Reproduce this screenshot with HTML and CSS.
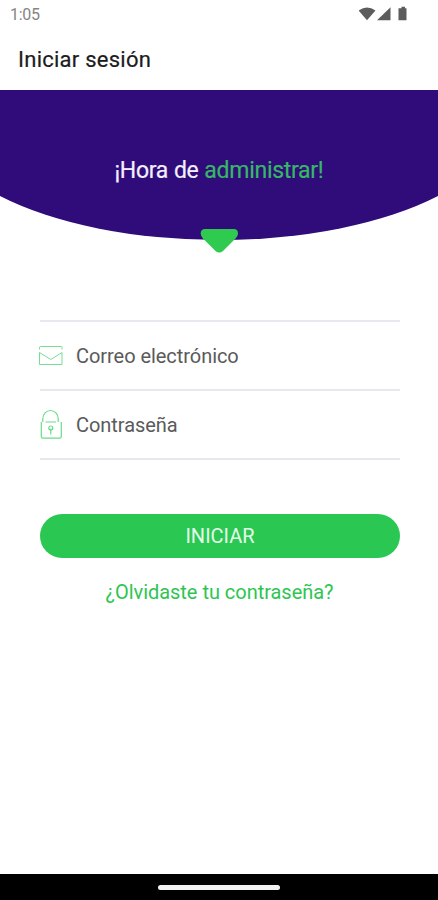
FILE: index.html
```html
<!DOCTYPE html>
<html lang="es">
<head>
<meta charset="utf-8">
<meta name="viewport" content="width=device-width, initial-scale=1">
<title>Iniciar sesión</title>
<link rel="stylesheet" href="styles.css">
</head>
<body>
<div class="screen">
  <div class="status">
    <span class="clock">1:05</span>
    <svg class="status-icons" width="50" height="16" viewBox="0 0 50 16" fill="#5c5c5c">
      <path d="M-0.500 4.500Q8-1.500 16.500 4.500L8 14.300Z"/>
      <path d="M31.500 1.200V14.300H18Z"/>
      <path d="M41.500 2.300H42.500V.8H46V2.300H47.500V14.300H39.500V2.300Z"/>
    </svg>
  </div>
  <header class="appbar"><h1 class="title">Iniciar sesión</h1></header>
  <section class="hero">
    <svg class="hero-shape" width="438" height="164" viewBox="0 0 438 164">
      <path fill="#2f0c7a" d="M0 0H438V106A285 122 0 0 1 0 106Z"/>
      <path fill="#2fca50" d="M205 139H234Q238 139 238 143.500Q238 146 235.500 148.500L223 161Q219.300 164 215.500 161L203 148.500Q200.700 146 200.700 143.500Q200.700 139 205 139Z"/>
    </svg>
    <p class="slogan">¡Hora de <span class="accent">administrar!</span></p>
  </section>
  <form class="form">
    <label class="field">
      <svg class="icon" width="26" height="34" viewBox="0 0 26 34" fill="none" stroke="#79dc93" stroke-width="1">
        <path d="M1.500 10.500V8.500Q1.500 7.500 2.500 7.500H23Q24 7.500 24 8.500V10.500"/>
        <path d="M1.500 13.500V25.500H24V13.500L12.800 20.500Z"/>
      </svg>
      <span class="label">Correo electrónico</span>
    </label>
    <label class="field">
      <svg class="icon" width="26" height="34" viewBox="0 0 26 34" fill="none" stroke="#6fda8a" stroke-width="1.200">
        <path d="M4.800 14V10.700A7.700 8.200 0 0 1 20.200 10.700V14M7.500 14H18"/>
        <path d="M3.300 14V28.500Q3.300 30.200 5 30.200H21.500Q23.300 30.200 23.300 28.500V14"/>
        <circle cx="12.800" cy="20" r="2"/><path d="M12.800 20.500V26.500"/>
      </svg>
      <span class="label">Contraseña</span>
    </label>
    <button class="submit" type="button">INICIAR</button>
    <a class="forgot">¿Olvidaste tu contraseña?</a>
  </form>
  <footer class="navbar"><div class="handle"></div></footer>
</div>
</body>
</html>
```
FILE: styles.css
```css
* { box-sizing: border-box; }
body { margin: 0; background: #fff; font-family: Roboto, sans-serif; }
.screen { width: 438px; height: 900px; display: flex; flex-direction: column; overflow: hidden; }
.status { height: 30px; padding: 0 29px 2px 10px; display: flex; align-items: center; justify-content: space-between; }
.clock { font-size: 16px; color: #858585; letter-spacing: -0.3px; }
.appbar { height: 60px; padding-left: 18px; display: flex; align-items: center; }
.title { margin: 0; font-size: 22px; line-height: 28px; font-weight: 400; color: #1c1c1c; -webkit-text-stroke: 0.2px; letter-spacing: 0.25px; }
.hero { height: 164px; display: grid; justify-items: center; align-items: start; }
.hero-shape, .slogan { grid-area: 1 / 1; }
.slogan { margin: 67px 0 0; font-size: 23px; line-height: 28px; letter-spacing: -0.28px; word-spacing: 0.4px; color: #f3effc; white-space: nowrap; -webkit-text-stroke: 0.2px; }
.accent { color: #37b766; }
.form { flex: 1; margin: 66px 38px 0 40px; display: flex; flex-direction: column; border-top: 2px solid #e8e8f0; }
.field { height: 69px; display: flex; align-items: center; gap: 12px; border-bottom: 2px solid #e8e8ec; }
.icon { margin-left: -2px; flex: none; }
.label { font-size: 20px; line-height: 26px; letter-spacing: -0.05px; color: #5a5a5a; }
.submit { margin-top: 54px; height: 44px; border: 0; border-radius: 22px; background: #2ac853; color: #e4fbe8; font: 400 20px/24px Roboto, sans-serif; padding: 0; }
.forgot { margin: 20px 1px 0 0; align-self: center; font-size: 20px; line-height: 28px; letter-spacing: -0.03px; color: #2dc552; white-space: nowrap; }
.navbar { height: 26px; background: #000; display: flex; align-items: center; justify-content: center; }
.handle { width: 122px; height: 5px; border-radius: 3px; background: #f2f2f2; }
```
